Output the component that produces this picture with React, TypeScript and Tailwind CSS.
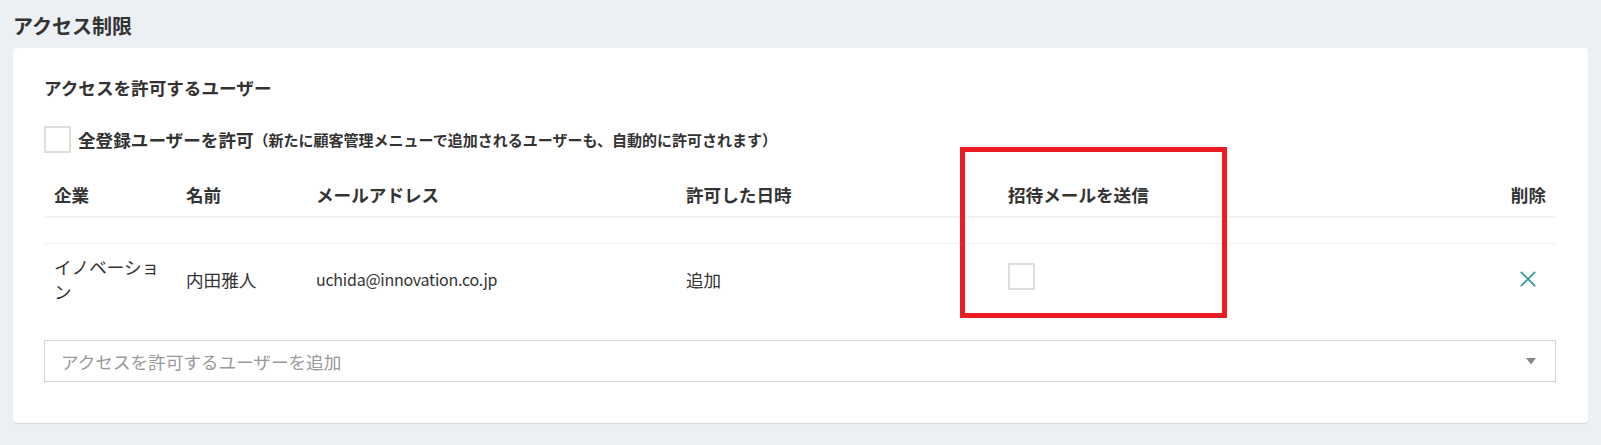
import React from "react";

function XIcon() {
  return (
    <svg width="16" height="16" viewBox="0 0 16 16" fill="none">
      <path d="M1.5 1.5 L14.5 14.5 M14.5 1.5 L1.5 14.5" stroke="#3b9c9a" strokeWidth="1.8" strokeLinecap="square" />
    </svg>
  );
}

function Box() {
  return <div className="w-[27px] h-[27px] border-2 border-[#e1ded9] bg-white shrink-0" />;
}

export default function App() {
  return (
    <div className="relative min-h-screen w-full bg-[#eceff3] font-['Noto_Sans_CJK_JP',sans-serif] text-[#333] pt-[12px] pb-[20px]">
      <div className="pl-[13px] h-[28px] leading-[28px] text-[20px] font-bold text-[#333]">アクセス制限</div>
      <div className="mt-[8px] mx-[13px] bg-white rounded-[4px] shadow-[0_1px_1px_rgba(0,0,0,0.1)] pt-[27px] pb-[41px] pl-[31px] pr-[32px]">
        <div className="text-[17.6px] leading-[25px] font-bold">アクセスを許可するユーザー</div>
        <div className="mt-[26px] h-[27px] flex items-center">
          <Box />
          <span className="ml-[7px] text-[17.6px] font-bold leading-[25px]">全登録ユーザーを許可</span>
          <span className="text-[15px] font-bold leading-[25px]">（新たに顧客管理メニューで追加されるユーザーも、自動的に許可されます）</span>
        </div>
        <div className="mt-[19px] grid grid-cols-[132px_130px_370px_322px_1fr_100px] h-[46px] items-center border-b-2 border-[#f2f2f2] text-[17.6px] font-bold leading-[25px]">
          <div className="pl-[10px]">企業</div>
          <div className="pl-[10px]">名前</div>
          <div className="pl-[10px]">メールアドレス</div>
          <div className="pl-[10px]">許可した日時</div>
          <div className="pl-[10px]">招待メールを送信</div>
          <div className="pr-[10px] text-right">削除</div>
        </div>
        <div className="h-[26px] border-b border-[#f1f1f1]" />
        <div className="grid grid-cols-[132px_130px_370px_322px_1fr_100px] h-[70px] items-center text-[17.6px] leading-[25px]">
          <div className="pl-[10px] pr-[10px]">イノベーション</div>
          <div className="pl-[10px]">内田雅人</div>
          <div className="pl-[10px] text-[16px] tracking-[-0.25px]">uchida@innovation.co.jp</div>
          <div className="pl-[10px]">追加</div>
          <div className="pl-[10px] flex items-center -mt-[6px]">
            <Box />
          </div>
          <div className="flex justify-end pr-[20px]">
            <XIcon />
          </div>
        </div>
        <div className="mt-[26px] h-[42px] border border-[#cdd4dc] flex items-center justify-between pl-[16px] pr-[19px]">
          <span className="text-[17.6px] text-[#999] leading-[25px]">アクセスを許可するユーザーを追加</span>
          <svg width="10" height="7" viewBox="0 0 10 7">
            <path d="M0 0 L10 0 L5 6.5 Z" fill="#888" />
          </svg>
        </div>
      </div>
      <div className="absolute left-[960px] top-[147px] w-[267px] h-[171px] border-[5px] border-[#ed1c24] pointer-events-none" />
    </div>
  );
}
